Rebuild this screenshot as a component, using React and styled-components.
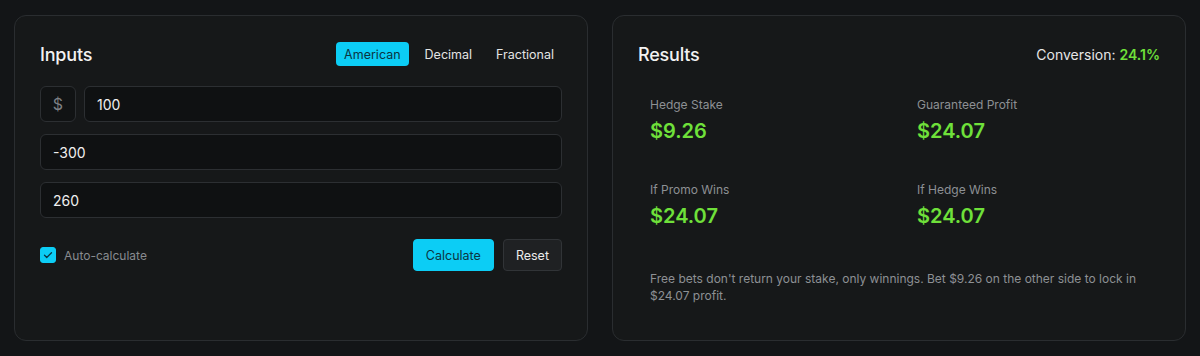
import React, { useState } from "react";
import styled, { createGlobalStyle } from "styled-components";

const GlobalStyle = createGlobalStyle`
  html, body {
    margin: 0;
    padding: 0;
    background: #131517;
  }
  body {
    font-family: Inter, "Noto Sans", sans-serif;
    color: #ececec;
    -webkit-font-smoothing: antialiased;
  }
  * {
    box-sizing: border-box;
  }
`;

const Page = styled.div`
  display: grid;
  grid-template-columns: 1fr 1fr;
  gap: 24px;
  padding: 15px 14px;
  width: 1200px;
  height: 356px;
`;

const Card = styled.section`
  background: #161819;
  border: 1px solid #2a2d30;
  border-radius: 12px;
  padding: 25px 25px;
  display: flex;
  flex-direction: column;
`;

const Header = styled.div`
  display: flex;
  align-items: center;
  justify-content: space-between;
  height: 26px;
  margin-bottom: 18px;
`;

const Title = styled.h2`
  margin: 0;
  font-size: 18px;
  font-weight: 500;
  color: #f2f2f2;
  letter-spacing: -0.2px;
`;

const Tabs = styled.div`
  display: flex;
  gap: 8px;
`;

const Tab = styled.button`
  font-family: inherit;
  font-size: 12.5px;
  height: 24px;
  padding: 0 8px;
  border: none;
  border-radius: 4px;
  cursor: pointer;
  background: ${(p) => (p.$active ? "#0ccdf5" : "transparent")};
  color: ${(p) => (p.$active ? "#0b3442" : "#e4e4e4")};
`;

const Fields = styled.div`
  display: flex;
  flex-direction: column;
  gap: 12px;
  margin-top: 1px;
`;

const Row = styled.div`
  display: flex;
  gap: 8px;
`;

const Prefix = styled.div`
  flex: 0 0 36px;
  height: 36px;
  display: flex;
  align-items: center;
  justify-content: center;
  border: 1px solid #2c2f32;
  border-radius: 6px;
  background: #111314;
  color: #7d8084;
  font-size: 16px;
`;

const Input = styled.input`
  width: 100%;
  min-width: 0;
  height: 36px;
  flex: none;
  padding: 0 12px;
  border: 1px solid #2c2f32;
  border-radius: 6px;
  background: #0f1112;
  color: #efefef;
  font-family: inherit;
  font-size: 14px;
  outline: none;
`;

const RowInput = styled(Input)`
  flex: 1;
  width: auto;
`;

const Actions = styled.div`
  display: flex;
  align-items: center;
  justify-content: space-between;
  margin-top: 21px;
`;

const Check = styled.label`
  display: flex;
  align-items: center;
  gap: 8px;
  font-size: 12px;
  color: #888b8f;
  cursor: pointer;
`;

const Box = styled.span`
  width: 16px;
  height: 16px;
  border-radius: 3px;
  background: ${(p) => (p.$on ? "#0ccdf5" : "transparent")};
  border: 1px solid ${(p) => (p.$on ? "#0ccdf5" : "#555")};
  display: flex;
  align-items: center;
  justify-content: center;
`;

const Buttons = styled.div`
  display: flex;
  gap: 9px;
`;

const Button = styled.button`
  font-family: inherit;
  font-size: 12.5px;
  height: 32px;
  padding: 0 12px;
  border-radius: 4px;
  cursor: pointer;
  border: 1px solid ${(p) => (p.$primary ? "#0ccdf5" : "#313437")};
  background: ${(p) => (p.$primary ? "#0ccdf5" : "#1f2123")};
  color: ${(p) => (p.$primary ? "#0b3442" : "#ececec")};
`;

const Conversion = styled.div`
  font-size: 14px;
  color: #e6e6e6;
  span {
    color: #6fe03a;
    font-weight: 600;
  }
`;

const StatGrid = styled.div`
  display: grid;
  grid-template-columns: 1fr 1fr;
  column-gap: 12px;
  row-gap: 15px;
`;

const Stat = styled.div`
  padding: 12px 12px 12px;
  display: flex;
  flex-direction: column;
  gap: 7px;
`;

const Label = styled.div`
  font-size: 12px;
  color: #8d9094;
`;

const Value = styled.div`
  font-size: 20px;
  font-weight: 600;
  color: #6fe03a;
`;

const Note = styled.p`
  margin: 30px 0 0;
  padding: 0 12px;
  font-size: 12px;
  line-height: 17px;
  color: #8d9094;
`;

const stats = [
  { label: "Hedge Stake", value: "$9.26" },
  { label: "Guaranteed Profit", value: "$24.07" },
  { label: "If Promo Wins", value: "$24.07" },
  { label: "If Hedge Wins", value: "$24.07" },
];

const App = () => {
  const [mode, setMode] = useState("American");
  const [auto, setAuto] = useState(true);

  return (
    <>
      <GlobalStyle />
      <Page>
        <Card>
          <Header>
            <Title>Inputs</Title>
            <Tabs>
              {["American", "Decimal", "Fractional"].map((m) => (
                <Tab key={m} $active={mode === m} onClick={() => setMode(m)}>
                  {m}
                </Tab>
              ))}
            </Tabs>
          </Header>
          <Fields>
            <Row>
              <Prefix>$</Prefix>
              <RowInput defaultValue="100" />
            </Row>
            <Input defaultValue="-300" />
            <Input defaultValue="260" />
          </Fields>
          <Actions>
            <Check onClick={() => setAuto(!auto)}>
              <Box $on={auto}>
                {auto && (
                  <svg width="12" height="12" viewBox="0 0 24 24" fill="none" stroke="#0b3442" strokeWidth="2.5" strokeLinecap="round" strokeLinejoin="round">
                    <path d="M5 12.5l4.5 4.5L19 7.5" />
                  </svg>
                )}
              </Box>
              Auto-calculate
            </Check>
            <Buttons>
              <Button $primary>Calculate</Button>
              <Button>Reset</Button>
            </Buttons>
          </Actions>
        </Card>

        <Card>
          <Header>
            <Title>Results</Title>
            <Conversion>
              Conversion: <span>24.1%</span>
            </Conversion>
          </Header>
          <StatGrid>
            {stats.map((s) => (
              <Stat key={s.label}>
                <Label>{s.label}</Label>
                <Value>{s.value}</Value>
              </Stat>
            ))}
          </StatGrid>
          <Note>
            Free bets don't return your stake, only winnings. Bet $9.26 on the
            other side to lock in $24.07 profit.
          </Note>
        </Card>
      </Page>
    </>
  );
};

export default App;
